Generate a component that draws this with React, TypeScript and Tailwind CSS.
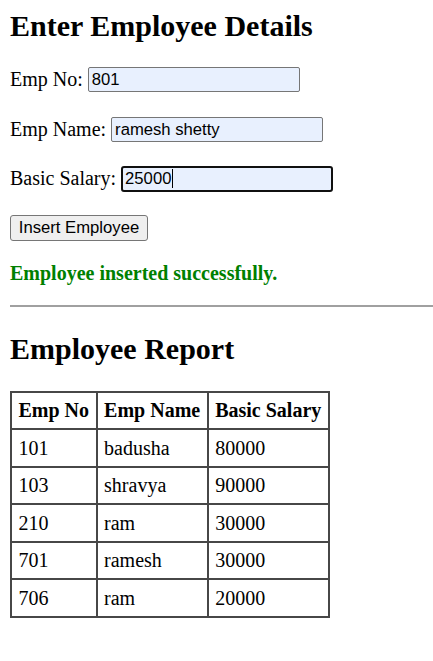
import React from "react";

const serif = { fontFamily: '"Liberation Serif", "Times New Roman", serif' };
const sans = { fontFamily: '"Liberation Sans", Arial, sans-serif' };

function Field({ label, value, focused }: { label: string; value: string; focused?: boolean }) {
  return (
    <div className="flex h-[30px] items-center gap-[5px] text-[20px] leading-[23px] text-black">
      <span>{label}</span>
      <div
        className={
          focused
            ? "flex h-[26px] w-[212px] items-center rounded-[3px] border-2 border-[#101010] bg-[#e8f0fe] px-[2px] text-[16.67px] text-black"
            : "flex h-[25px] w-[212px] items-center rounded-[2px] border border-[#767676] bg-[#e8f0fe] px-[3px] text-[16.67px] text-black"
        }
        style={sans}
      >
        <span>{value}</span>
        {focused && <span className="ml-px inline-block h-[19px] w-px bg-black" />}
      </div>
    </div>
  );
}

const rows = [
  ["101", "badusha", "80000"],
  ["103", "shravya", "90000"],
  ["210", "ram", "30000"],
  ["701", "ramesh", "30000"],
  ["706", "ram", "20000"],
];

export default function App() {
  return (
    <div className="min-h-[661px] bg-white pl-[10px] pt-[8px] text-black" style={serif}>
      <h1 className="text-[30px] font-bold leading-[35px]">Enter Employee Details</h1>

      <div className="mt-[21.5px] flex flex-col gap-[19.5px]">
        <Field label="Emp No:" value="801" />
        <Field label="Emp Name:" value="ramesh shetty" />
        <Field label="Basic Salary:" value="25000" focused />
        <div className="flex h-[30px] items-center">
          <button
            className="h-[26px] w-[138px] rounded-[3px] border border-[#767676] bg-[#efefef] text-[16.67px] leading-[20px] text-black"
            style={sans}
          >
            Insert Employee
          </button>
        </div>
      </div>

      <div className="mt-[19px] text-[20px] font-bold leading-[23px] text-[#008000]">
        Employee inserted successfully.
      </div>

      <div className="mt-[20px] h-[2px] bg-[#a0a0a0]" />

      <h1 className="mt-[24.4px] text-[30px] font-bold leading-[35px]">Employee Report</h1>

      <table className="mt-[24.6px] border-collapse border-2 border-[#474747] text-[20px] leading-[23px]">
        <thead>
          <tr>
            <th className="border-2 border-[#474747] px-[6.5px] py-[6.25px] text-left font-bold">Emp No</th>
            <th className="border-2 border-[#474747] px-[6.5px] py-[6.25px] text-left font-bold">Emp Name</th>
            <th className="border-2 border-[#474747] px-[6.5px] py-[6.25px] text-left font-bold">Basic Salary</th>
          </tr>
        </thead>
        <tbody>
          {rows.map((r) => (
            <tr key={r[0] + r[1]}>
              {r.map((c, i) => (
                <td key={i} className="border-2 border-[#474747] px-[6.5px] py-[6.25px] text-left">
                  {c}
                </td>
              ))}
            </tr>
          ))}
        </tbody>
      </table>
    </div>
  );
}
